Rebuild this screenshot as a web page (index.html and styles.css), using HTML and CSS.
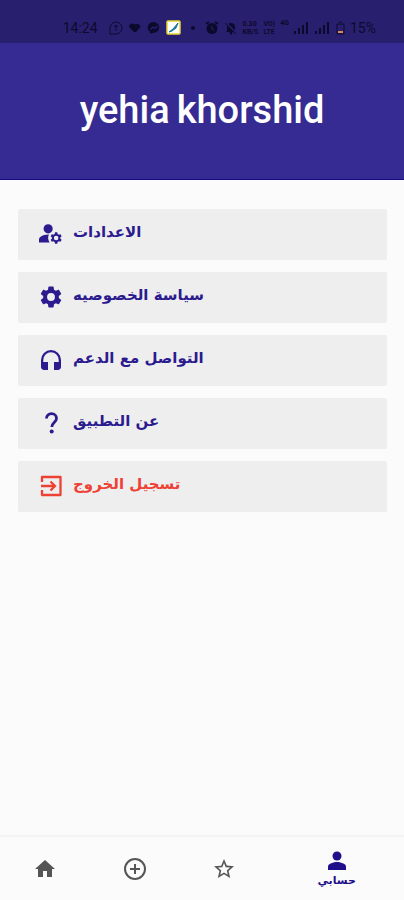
FILE: index.html
```html
<!DOCTYPE html>
<html lang="ar">
<head>
    <meta charset="UTF-8">
    <meta name="viewport" content="width=device-width, initial-scale=1.0">
    <title>حسابي</title>
    <link rel="stylesheet" href="styles.css">
</head>
<body>
    <div class="status-bar">
        <span class="time">14:24</span>
        <svg class="status-icon" viewBox="0 0 14 14"><path d="M1 13V7a6 6 0 1 1 6 6z" fill="none" stroke="currentColor"/><path d="M7 4v6M5 6l2-2 2 2" fill="none" stroke="currentColor"/></svg>
        <svg class="status-icon" viewBox="0 0 14 14"><path d="M1 6a3.500 3.500 0 0 1 6-2.500A3.500 3.500 0 0 1 12.500 6L8 11H6z" fill="currentColor"/></svg>
        <svg class="status-icon" viewBox="0 0 14 14"><path d="M7 1a6 5.500 0 0 0-4 9.800V13l2-1a6 5.500 0 1 0 2-11z" fill="currentColor"/><path d="M3.500 8.500L6 6l2 1.500L10.500 5" fill="none" stroke="#28206f" stroke-width="1.300"/></svg>
        <svg class="app-icon" viewBox="0 0 15 15"><rect x="1" y="1" width="13" height="13" rx="1" fill="#fff" stroke="#e5d338" stroke-width="1.500"/><path d="M3 12l4-3 5-6-2 5-4 3z" fill="#1676a0" stroke="#1676a0"/></svg>
        <svg class="status-icon dot" viewBox="0 0 14 14"><circle cx="7" cy="7" r="2" fill="currentColor"/></svg>
        <svg class="status-icon" viewBox="0 0 14 14"><circle cx="7" cy="7.500" r="5.500" fill="currentColor"/><path d="M1 3l3-2M13 3l-3-2" stroke="currentColor" stroke-width="2"/><path d="M7 5v3l2 1" fill="none" stroke="#28206f"/></svg>
        <svg class="status-icon" viewBox="0 0 14 14"><path d="M3 10V6a4 4 0 0 1 8 0v4l1 1H2z" fill="currentColor"/><circle cx="7" cy="12" r="1.500" fill="currentColor"/><path d="M1 1l12 12" stroke="#28206f" stroke-width="2"/><path d="M1 2l11 11" stroke="currentColor"/></svg>
        <span class="tiny"><span>0.30</span><span>KB/S</span></span>
        <span class="tiny"><span>VO)</span><span>LTE</span></span>
        <span class="tiny network">4G</span>
        <svg class="signal" viewBox="0 0 16 12"><path d="M1 12V9M5 12V6M9 12V3M13 12V0" stroke="currentColor" stroke-width="2"/></svg>
        <svg class="signal" viewBox="0 0 16 12"><path d="M1 12V9M5 12V6M9 12V3M13 12V0" stroke="currentColor" stroke-width="2"/></svg>
        <svg class="battery" viewBox="0 0 9 14"><path d="M3 1h3M1 3h7v10H1z" fill="none" stroke="currentColor"/><path d="M2 10h5v2H2z" fill="#d58a5a"/></svg>
        <span class="percent">15%</span>
    </div>

    <header class="profile">
        <h1><span>yehia</span><span>khorshid</span></h1>
    </header>

    <main class="menu">
        <button class="menu-item">
            <svg viewBox="2 2 21 21"><circle cx="10" cy="8" r="4"/><path d="M10.670 13.020C10.450 13.010 10.230 13 10 13c-2.420 0-4.680.670-6.610 1.820C2.510 15.340 2 16.320 2 17.350V20h9.260A6.960 6.960 0 0 1 10 16c0-1.070.250-2.070.670-2.980zM20.750 16c0-.220-.030-.420-.060-.630l1.140-1.010-1-1.730-1.450.490c-.320-.270-.680-.480-1.080-.630L18 11h-2l-.300 1.490c-.400.150-.760.360-1.080.630l-1.450-.490-1 1.730 1.140 1.010c-.030.210-.060.410-.060.630s.030.420.060.630l-1.140 1.010 1 1.730 1.450-.490c.320.270.680.480 1.080.630L16 21h2l.300-1.490c.400-.150.760-.360 1.080-.630l1.450.490 1-1.730-1.140-1.010c.030-.210.060-.410.060-.630zM17 18a2 2 0 1 1 0-4 2 2 0 0 1 0 4z"/></svg>
            <span lang="ar" dir="rtl">الاعدادات</span>
        </button>
        <button class="menu-item">
            <svg viewBox="1 1 22 22"><path d="M19.140 12.940c.040-.300.060-.610.060-.940s-.020-.640-.070-.940l2.030-1.580c.180-.140.230-.410.120-.610l-1.920-3.320c-.120-.220-.370-.290-.590-.220l-2.390.960c-.500-.380-1.030-.700-1.620-.940l-.360-2.540c-.040-.240-.240-.410-.480-.410h-3.840c-.240 0-.430.170-.470.410l-.360 2.540c-.590.240-1.130.570-1.620.940l-2.390-.960c-.220-.080-.470 0-.590.220L2.740 8.870c-.120.210-.080.470.120.610l2.030 1.580c-.050.300-.090.630-.090.940s.020.640.070.940l-2.030 1.580c-.180.140-.230.410-.120.610l1.920 3.320c.120.220.370.290.590.220l2.390-.960c.500.380 1.030.700 1.620.940l.360 2.540c.050.240.240.410.480.410h3.840c.240 0 .440-.170.470-.410l.360-2.540c.590-.240 1.130-.560 1.620-.940l2.390.960c.220.080.470 0 .590-.220l1.920-3.320c.120-.220.070-.470-.120-.610zM12 15.600A3.600 3.600 0 1 1 12 8.400a3.600 3.600 0 0 1 0 7.200z"/></svg>
            <span lang="ar" dir="rtl">سياسة الخصوصيه</span>
        </button>
        <button class="menu-item">
            <svg viewBox="0 0 24 24"><path d="M12 2a10 10 0 0 0-10 10v7c0 1.660 1.340 3 3 3h4v-8H4.300v-2a7.700 7.700 0 0 1 15.400 0v2H15v8h4c1.660 0 3-1.340 3-3v-7A10 10 0 0 0 12 2z"/></svg>
            <span lang="ar" dir="rtl">التواصل مع الدعم</span>
        </button>
        <button class="menu-item">
            <svg viewBox="0 0 24 24"><path d="M7.500 7.500a5 4.800 0 0 1 10 0c0 3.500-4.700 4-4.700 8.500" fill="none" stroke="currentColor" stroke-width="2.800"/><circle cx="12.700" cy="20.500" r="2"/></svg>
            <span lang="ar" dir="rtl">عن التطبيق</span>
        </button>
        <button class="menu-item logout">
            <svg viewBox="0 0 24 24"><path d="M3 8V3h18.500v18H3v-5" fill="none" stroke="currentColor" stroke-width="2.300" stroke-linejoin="round"/><path d="M2 12h14M11.500 7.500L16 12l-4.500 4.500" fill="none" stroke="currentColor" stroke-width="2.300"/></svg>
            <span lang="ar" dir="rtl">تسجيل الخروج</span>
        </button>
    </main>

    <nav class="bottom-nav">
        <a href="#home" aria-label="الرئيسية"><svg viewBox="0 0 24 24"><path d="M10 20v-6h4v6h5v-8h3L12 3 2 12h3v8z"/></svg></a>
        <a href="#add" aria-label="إضافة"><svg viewBox="0 0 24 24"><path d="M13 7h-2v4H7v2h4v4h2v-4h4v-2h-4zM12 1a11 11 0 1 0 0 22 11 11 0 0 0 0-22zm0 20a9 9 0 1 1 0-18 9 9 0 0 1 0 18z"/></svg></a>
        <a href="#favorites" aria-label="المفضلة"><svg viewBox="0 0 24 24"><path d="M22 9.240l-7.190-.620L12 2 9.190 8.630 2 9.240l5.460 4.730L5.820 21 12 17.270 18.180 21l-1.630-7.030zM12 15.400l-3.760 2.270 1-4.280-3.320-2.880 4.380-.380L12 6.100l1.710 4.040 4.380.380-3.320 2.880 1 4.280z"/></svg></a>
        <a href="#account" class="active"><svg viewBox="0 0 24 24"><circle cx="12" cy="7" r="4.500"/><path d="M12 13c-3 0-9 1.500-9 4.500V21h18v-3.500c0-3-6-4.500-9-4.500z"/></svg><span lang="ar" dir="rtl">حسابي</span></a>
    </nav>
</body>
</html>
```
FILE: styles.css
```css
* {
    box-sizing: border-box;
}
body {
    font-family: "DejaVu Sans", sans-serif;
    background-color: #fbfbfb;
    color: #2b1b8f;
    display: flex;
    flex-direction: column;
    min-height: 100vh;
    margin: 0;
}
svg {
    fill: currentColor;
    flex-shrink: 0;
}
.status-bar {
    background-color: #28206f;
    color: #0c0a2c;
    display: flex;
    align-items: center;
    justify-content: flex-end;
    gap: 5px;
    padding: 14px 28px 2px 60px;
    height: 43px;
    font-family: Roboto, sans-serif;
    white-space: nowrap;
}
.time, .percent {
    font-size: 14px;
}
.time {
    margin-right: 6px;
}
.status-icon {
    width: 14px;
    height: 14px;
}
.app-icon {
    width: 15px;
    height: 15px;
}
.tiny {
    display: flex;
    flex-direction: column;
    font-size: 7px;
    font-weight: bold;
    line-height: 8px;
}
.network {
    align-self: flex-start;
    padding-top: 5px;
}
.signal {
    width: 16px;
    height: 12px;
}
.battery {
    width: 9px;
    height: 14px;
}
.profile {
    background-color: #352b92;
    border-bottom: 1px solid #160a82;
    color: #fff;
    padding: 44px 20px 45px;
}
.profile h1 {
    display: flex;
    justify-content: center;
    gap: 7px;
    margin: 0;
    font-family: Roboto, sans-serif;
    font-size: 38px;
    font-weight: 500;
    line-height: 47px;
}
.menu {
    display: flex;
    flex-direction: column;
    gap: 12px;
    flex: 1;
    padding: 29px 17px 28px 18px;
}
.menu-item {
    display: flex;
    align-items: center;
    gap: 10px;
    height: 51px;
    padding: 0 21px 1px;
    border: none;
    border-radius: 2px;
    background-color: #eee;
    color: #2b1b8f;
    font-family: "DejaVu Sans", sans-serif;
    font-size: 15px;
    font-weight: bold;
    line-height: 20px;
    cursor: pointer;
}
.menu-item svg {
    width: 24px;
    height: 24px;
}
.menu-item span {
    padding-bottom: 4px;
}
.menu-item:hover {
    background-color: #e6e6e6;
}
.menu-item.logout {
    color: #ee4135;
}
.bottom-nav {
    display: flex;
    height: 65px;
    border-top: 2px solid #f3f3f3;
}
.bottom-nav a {
    display: flex;
    flex-direction: column;
    align-items: center;
    justify-content: center;
    flex: 2;
    color: #555;
    text-decoration: none;
}
.bottom-nav a.active {
    flex: 3;
    color: #1f0f8a;
    font-size: 11px;
    font-weight: bold;
    line-height: 15px;
}
.bottom-nav svg {
    width: 24px;
    height: 24px;
}
```
